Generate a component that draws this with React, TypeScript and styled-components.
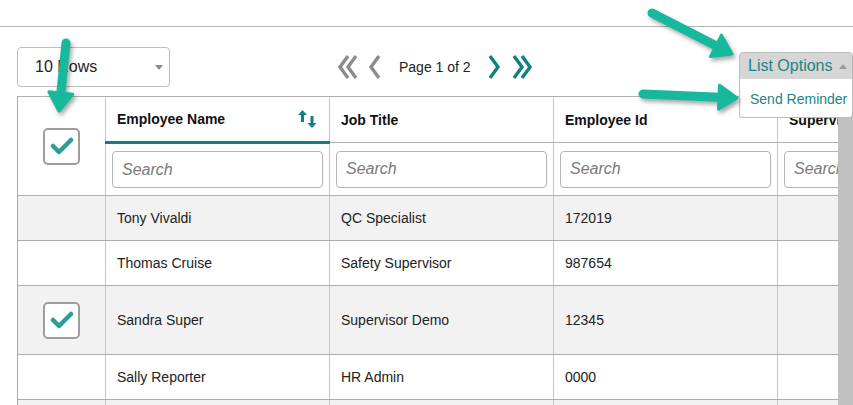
import React from "react";
import styled, { createGlobalStyle } from "styled-components";

const GlobalStyle = createGlobalStyle`
  html, body {
    margin: 0;
    padding: 0;
    background: #ffffff;
    font-family: "Liberation Sans", Arial, sans-serif;
    color: #222222;
  }
  * { box-sizing: border-box; }
`;

const TEAL = "#12807c";

const rows = [
  { name: "Tony Vivaldi", title: "QC Specialist", id: "172019", checked: false },
  { name: "Thomas Cruise", title: "Safety Supervisor", id: "987654", checked: false },
  { name: "Sandra Super", title: "Supervisor Demo", id: "12345", checked: true },
  { name: "Sally Reporter", title: "HR Admin", id: "0000", checked: false },
];

const Page = styled.div`
  position: relative;
  width: 853px;
  height: 405px;
  overflow: hidden;
`;

const TopBar = styled.div`
  height: 27px;
  border-bottom: 1px solid #b4b4b4;
`;

const Content = styled.div`
  padding: 20px 0 0 17px;
`;

const Toolbar = styled.div`
  display: flex;
  align-items: flex-start;
  height: 40px;
  margin-bottom: 9px;
`;

const RowSelect = styled.div`
  width: 153px;
  height: 40px;
  border: 1px solid #bdbdbd;
  border-radius: 4px;
  display: flex;
  align-items: center;
  justify-content: space-between;
  padding: 0 6px 0 17px;
  font-size: 16px;
  color: #222;
`;

const Caret = styled.span<{ $up?: boolean }>`
  width: 0;
  height: 0;
  border-left: 4px solid transparent;
  border-right: 4px solid transparent;
  ${(p) => (p.$up ? "border-bottom: 5px solid #9a9a9a;" : "border-top: 5px solid #8a8a8a;")}
`;

const Pager = styled.div`
  display: flex;
  align-items: center;
  height: 40px;
  margin-left: 167px;
`;

const PageLabel = styled.span`
  font-size: 14px;
  color: #222;
  margin: 0 17px 0 18px;
`;

const NavIcon = styled.svg<{ $gap?: number }>`
  display: block;
  margin-right: ${(p) => p.$gap ?? 0}px;
`;

const OptionsWrap = styled.div`
  position: relative;
  margin-left: auto;
  margin-top: 5px;
  width: 114px;
  z-index: 3;
`;

const OptionsButton = styled.div`
  height: 28px;
  background: #d6d6d6;
  border: 1px solid #bcbcbc;
  border-radius: 4px 4px 0 0;
  display: flex;
  align-items: center;
  justify-content: space-between;
  padding: 0 5px 0 8px;
  font-size: 16px;
  color: #1d8583;
`;

const OptionsMenu = styled.div`
  position: absolute;
  top: 27px;
  left: 0;
  right: 0;
  height: 39px;
  background: #fff;
  border: 1px solid #bcbcbc;
  border-top: none;
  border-radius: 0 0 4px 4px;
  padding: 12px 0 0 10px;
  font-size: 14px;
  color: #1d8583;
`;

const TableArea = styled.div`
  display: flex;
`;

const TableClip = styled.div`
  width: 821px;
  overflow: hidden;
`;

const Scrollbar = styled.div`
  width: 15px;
  background: #c1c1c1;
`;

const Table = styled.table`
  border-collapse: collapse;
  table-layout: fixed;
  width: 985px;
  font-size: 14px;
`;

const HeadCell = styled.th<{ $active?: boolean }>`
  height: 46px;
  text-align: left;
  font-weight: bold;
  padding: 0 11px;
  border-top: 1px solid #b0b0b0;
  border-left: 1px solid #c6c6c6;
  border-bottom: ${(p) => (p.$active ? `3px solid ${TEAL}` : "1px solid #b0b0b0")};
  white-space: nowrap;
  overflow: hidden;
  color: #111;
`;

const HeadInner = styled.div`
  display: flex;
  align-items: center;
  justify-content: space-between;
`;

const CheckHead = styled.th`
  width: 88px;
  border-top: 1px solid #b0b0b0;
  border-left: 1px solid #a8a8a8;
  border-bottom: 1px solid #b0b0b0;
  vertical-align: middle;
`;

const SearchCell = styled.td`
  height: 53px;
  padding: 0 6px;
  border-left: 1px solid #c6c6c6;
  border-bottom: 1px solid #b0b0b0;
`;

const SearchInput = styled.input`
  width: 100%;
  height: 37px;
  border: 1px solid #b3b3b3;
  border-radius: 4px;
  padding: 0 9px;
  font-family: "Liberation Sans", Arial, sans-serif;
  font-size: 16px;
  outline: none;
  &::placeholder {
    font-style: italic;
    color: #7a7a7a;
  }
`;

const BodyRow = styled.tr<{ $shade: boolean; $tall?: boolean }>`
  background: ${(p) => (p.$shade ? "#f2f2f2" : "#ffffff")};
  height: ${(p) => (p.$tall ? 69 : 45)}px;
`;

const Cell = styled.td<{ $first?: boolean }>`
  padding: 0 11px;
  border-left: 1px solid ${(p) => (p.$first ? "#a8a8a8" : "#c6c6c6")};
  border-bottom: 1px solid #adadad;
  color: #222;
  white-space: nowrap;
`;

const CheckBox = styled.div`
  width: 37px;
  height: 37px;
  margin: 0 auto;
  border: 2px solid #9e9e9e;
  border-radius: 5px;
  background: #fff;
  display: flex;
  align-items: center;
  justify-content: center;
`;

const Annotations = styled.svg`
  position: absolute;
  top: 0;
  left: 0;
  pointer-events: none;
  z-index: 5;
  filter: drop-shadow(2px 3px 2px rgba(0, 0, 0, 0.35));
`;

const Check = () => (
  <CheckBox>
    <svg width="24" height="20" viewBox="0 0 24 20">
      <polyline
        points="3,10 9,16 21,4"
        fill="none"
        stroke="#2a9c9a"
        strokeWidth="4.5"
        strokeLinecap="round"
        strokeLinejoin="round"
      />
    </svg>
  </CheckBox>
);

const Chevron = ({ dir, double, color, gap }: { dir: "l" | "r"; double?: boolean; color: string; gap?: number }) => {
  const w = double ? 20 : 13;
  const single = dir === "l" ? "11,1 3,12 11,23" : "2,1 10,12 2,23";
  const second = dir === "l" ? "19,1 11,12 19,23" : "10,1 18,12 10,23";
  return (
    <NavIcon width={w} height="24" viewBox={`0 0 ${w} 24`} $gap={gap}>
      <polyline points={single} fill="none" stroke={color} strokeWidth="3.4" />
      {double && <polyline points={second} fill="none" stroke={color} strokeWidth="3.4" />}
    </NavIcon>
  );
};

const SortIcon = () => (
  <svg width="20" height="20" viewBox="0 0 20 20">
    <path d="M4.5 1 L9 6 H6 V13 H3 V6 H0 Z" fill={TEAL} />
    <path d="M14 19 L9.5 14 H12.5 V7 H15.5 V14 H18.5 Z" fill={TEAL} />
  </svg>
);

const Arrow = ({ x1, y1, x2, y2 }: { x1: number; y1: number; x2: number; y2: number }) => {
  const dx = x2 - x1;
  const dy = y2 - y1;
  const len = Math.sqrt(dx * dx + dy * dy);
  const ux = dx / len;
  const uy = dy / len;
  const bx = x2 - ux * 18;
  const by = y2 - uy * 18;
  const px = -uy * 12;
  const py = ux * 12;
  return (
    <g>
      <line x1={x1} y1={y1} x2={bx} y2={by} stroke="#16b99c" strokeWidth="9" strokeLinecap="round" />
      <polygon
        points={`${x2},${y2} ${bx + px},${by + py} ${bx - px},${by - py}`}
        fill="#16b99c"
        stroke="#16b99c"
        strokeWidth="3"
        strokeLinejoin="round"
      />
    </g>
  );
};

export default function App() {
  return (
    <>
      <GlobalStyle />
      <Page>
        <TopBar />
        <Content>
          <Toolbar>
            <RowSelect>
              10 Rows
              <Caret />
            </RowSelect>
            <Pager>
              <Chevron dir="l" double color="#8c8c8c" gap={11} />
              <Chevron dir="l" color="#8c8c8c" />
              <PageLabel>Page 1 of 2</PageLabel>
              <Chevron dir="r" color={TEAL} gap={11} />
              <Chevron dir="r" double color={TEAL} />
            </Pager>
            <OptionsWrap>
              <OptionsButton>
                List Options
                <Caret $up />
              </OptionsButton>
              <OptionsMenu>Send Reminder</OptionsMenu>
            </OptionsWrap>
          </Toolbar>
          <TableArea>
            <TableClip>
              <Table>
                <colgroup>
                  <col style={{ width: 88 }} />
                  <col style={{ width: 224 }} />
                  <col style={{ width: 224 }} />
                  <col style={{ width: 224 }} />
                  <col style={{ width: 225 }} />
                </colgroup>
                <thead>
                  <tr>
                    <CheckHead rowSpan={2}>
                      <Check />
                    </CheckHead>
                    <HeadCell $active>
                      <HeadInner>
                        Employee Name
                        <SortIcon />
                      </HeadInner>
                    </HeadCell>
                    <HeadCell>Job Title</HeadCell>
                    <HeadCell>Employee Id</HeadCell>
                    <HeadCell>Supervisor</HeadCell>
                  </tr>
                  <tr>
                    {[0, 1, 2, 3].map((i) => (
                      <SearchCell key={i}>
                        <SearchInput placeholder="Search" />
                      </SearchCell>
                    ))}
                  </tr>
                </thead>
                <tbody>
                  {rows.map((r, i) => (
                    <BodyRow key={r.id} $shade={i % 2 === 0} $tall={r.checked}>
                      <Cell $first>{r.checked && <Check />}</Cell>
                      <Cell>{r.name}</Cell>
                      <Cell>{r.title}</Cell>
                      <Cell>{r.id}</Cell>
                      <Cell />
                    </BodyRow>
                  ))}
                  <BodyRow $shade>
                    <Cell $first />
                    <Cell />
                    <Cell />
                    <Cell />
                    <Cell />
                  </BodyRow>
                </tbody>
              </Table>
            </TableClip>
            <Scrollbar />
          </TableArea>
        </Content>
        <Annotations width="853" height="405">
          <Arrow x1={66} y1={43} x2={59} y2={111} />
          <Arrow x1={652} y1={13} x2={732} y2={54} />
          <Arrow x1={643} y1={94} x2={737} y2={98} />
        </Annotations>
      </Page>
    </>
  );
}
